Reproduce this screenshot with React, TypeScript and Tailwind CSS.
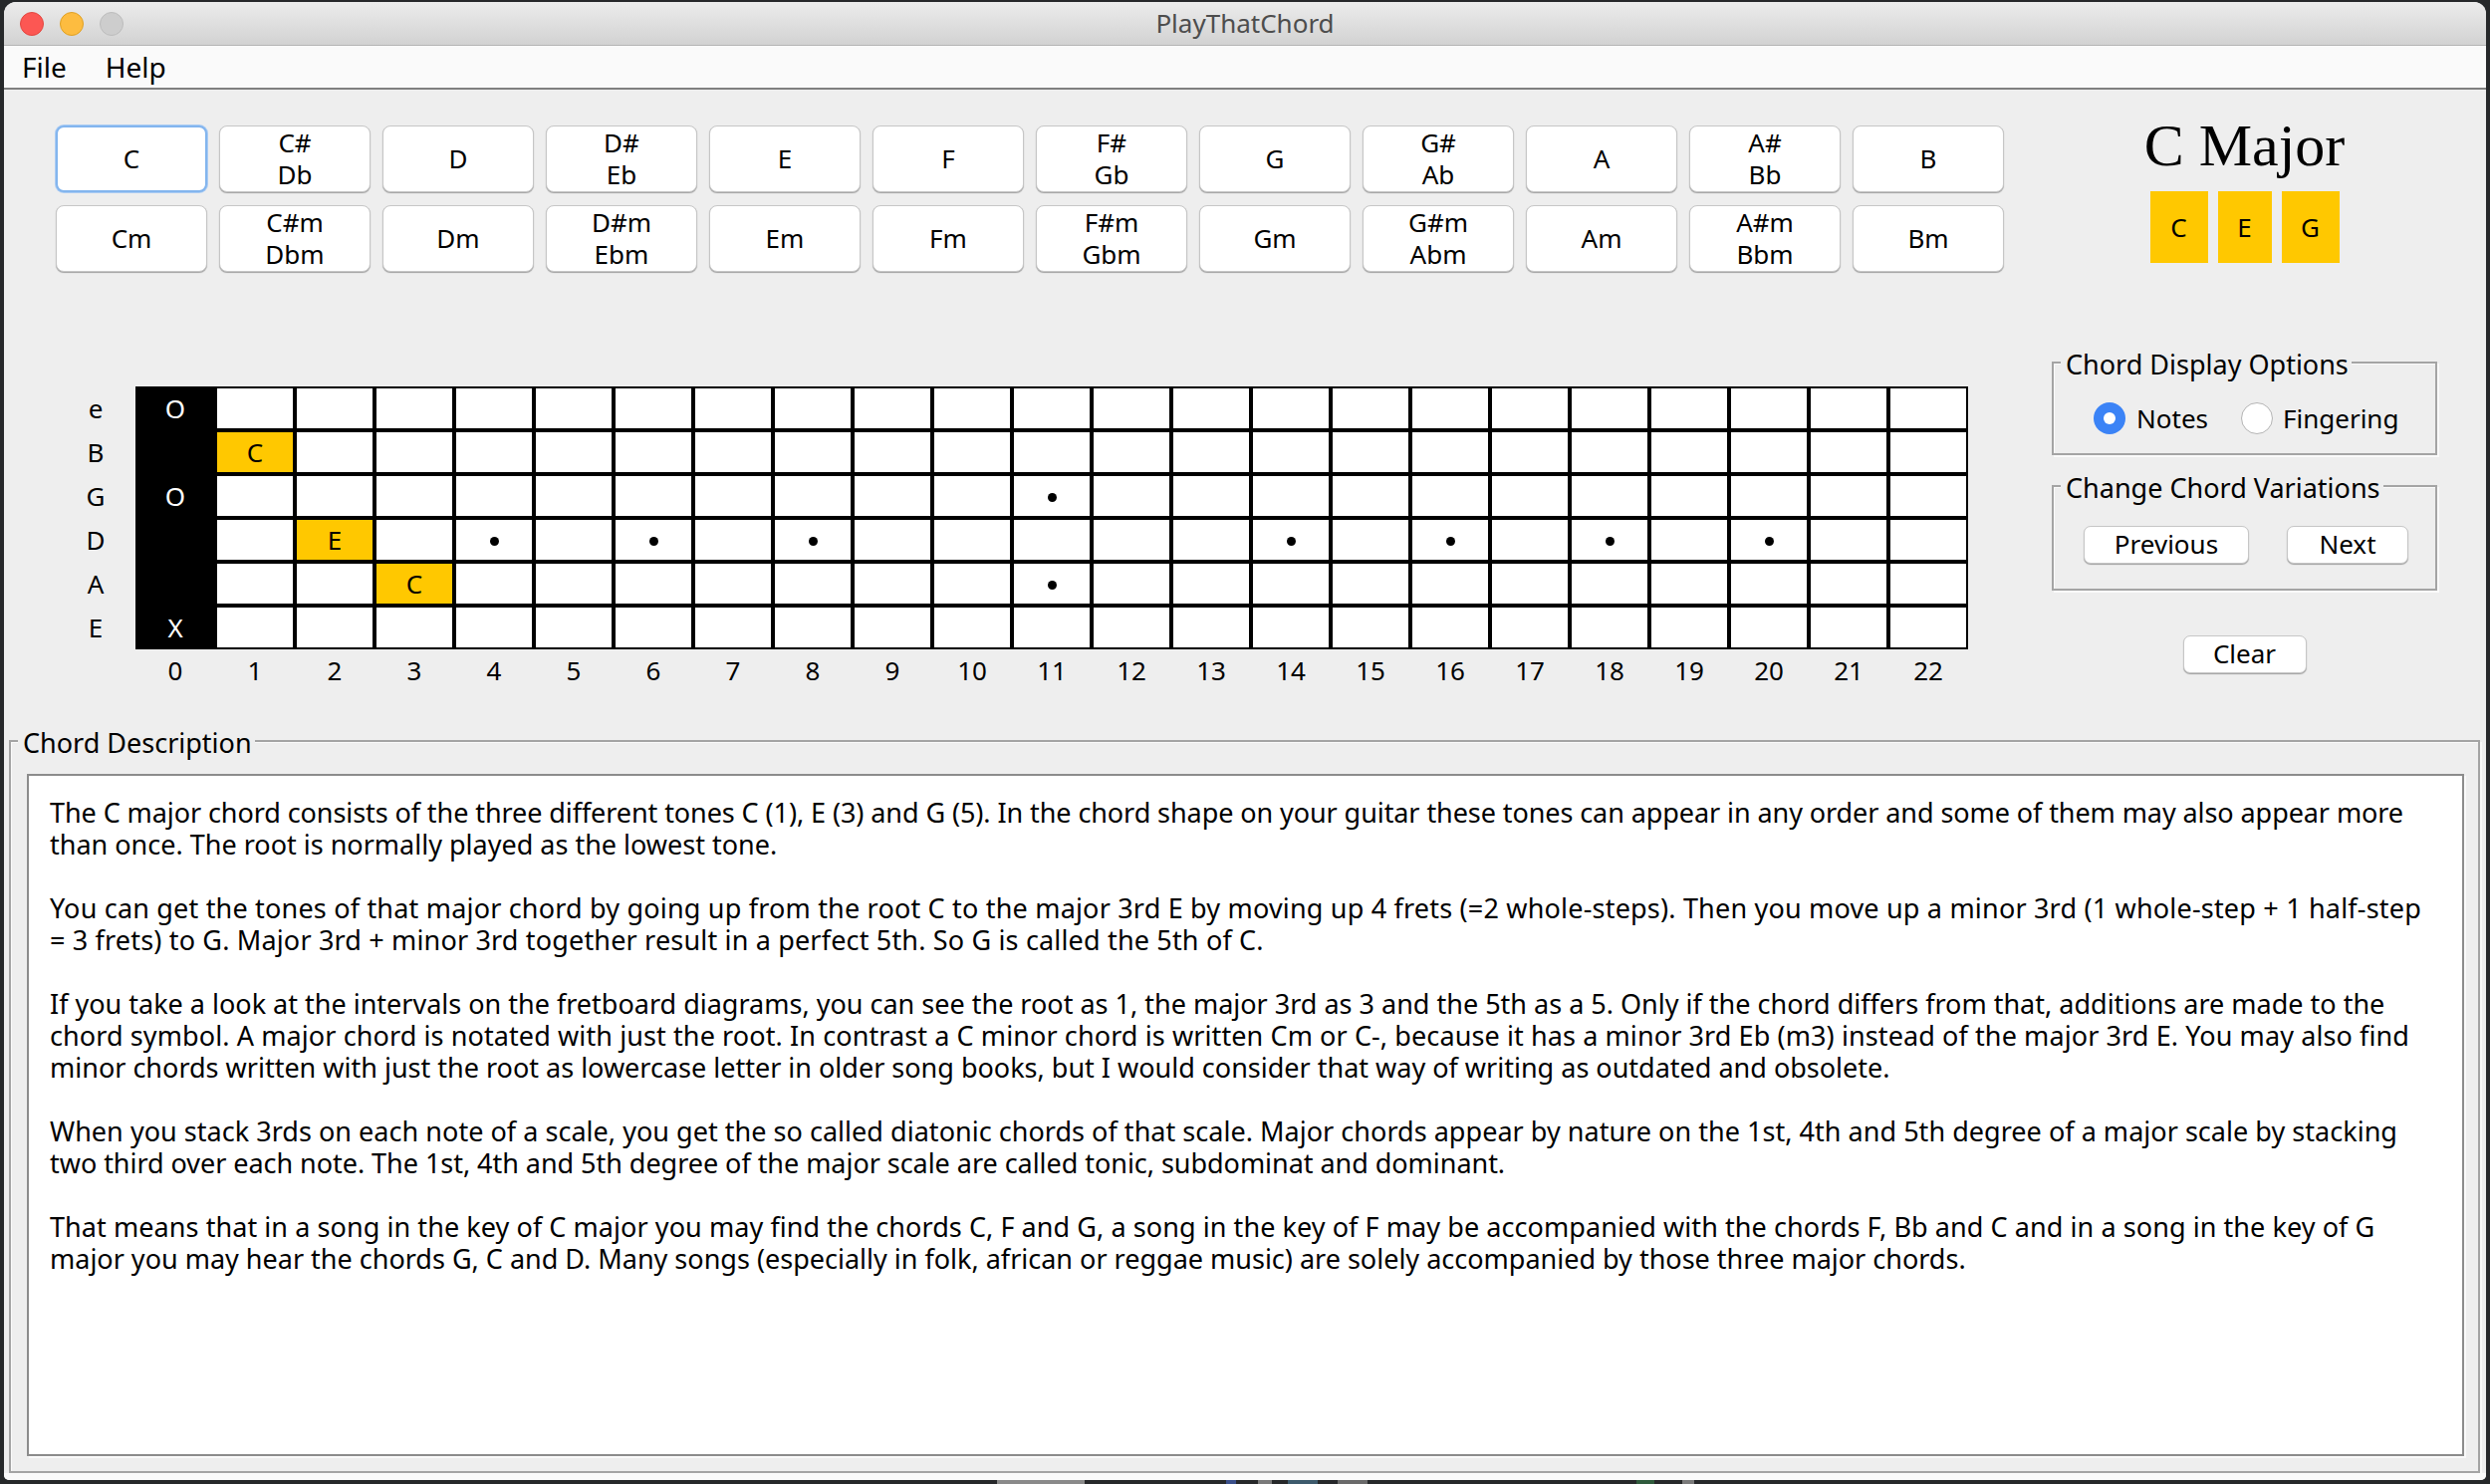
const MAJOR = ["C", "C#|Db", "D", "D#|Eb", "E", "F", "F#|Gb", "G", "G#|Ab", "A", "A#|Bb", "B"];
const MINOR = ["Cm", "C#m|Dbm", "Dm", "D#m|Ebm", "Em", "Fm", "F#m|Gbm", "Gm", "G#m|Abm", "Am", "A#m|Bbm", "Bm"];
const STRINGS = ["e", "B", "G", "D", "A", "E"];
const FRETS = Array.from({ length: 23 }, (_, i) => i);
const OPEN = ["O", "", "O", "", "", "X"];
const NOTES: Record<string, string> = { "1-1": "C", "3-2": "E", "4-3": "C" };
const DOTS = ["2-11", "3-4", "3-6", "3-8", "3-14", "3-16", "3-18", "3-20", "4-11"];

// text plus a small tracking nudge per line
const PARAGRAPHS: [string, string][][] = [
  [
    ["The C major chord consists of the three different tones C (1), E (3) and G (5). In the chord shape on your guitar these tones can appear in any order and some of them may also appear more", "tracking-[-0.08px]"],
    ["than once. The root is normally played as the lowest tone.", ""],
  ],
  [
    ["You can get the tones of that major chord by going up from the root C to the major 3rd E by moving up 4 frets (=2 whole-steps). Then you move up a minor 3rd (1 whole-step + 1 half-step", "tracking-[0.19px]"],
    ["= 3 frets) to G. Major 3rd + minor 3rd together result in a perfect 5th. So G is called the 5th of C.", "tracking-[0.17px]"],
  ],
  [
    ["If you take a look at the intervals on the fretboard diagrams, you can see the root as 1, the major 3rd as 3 and the 5th as a 5. Only if the chord differs from that, additions are made to the", ""],
    ["chord symbol. A major chord is notated with just the root. In contrast a C minor chord is written Cm or C-, because it has a minor 3rd Eb (m3) instead of the major 3rd E. You may also find", "tracking-[0.1px]"],
    ["minor chords written with just the root as lowercase letter in older song books, but I would consider that way of writing as outdated and obsolete.", ""],
  ],
  [
    ["When you stack 3rds on each note of a scale, you get the so called diatonic chords of that scale. Major chords appear by nature on the 1st, 4th and 5th degree of a major scale by stacking", "tracking-[0.03px]"],
    ["two third over each note. The 1st, 4th and 5th degree of the major scale are called tonic, subdominat and dominant.", "tracking-[-0.04px]"],
  ],
  [
    ["That means that in a song in the key of C major you may find the chords C, F and G, a song in the key of F may be accompanied with the chords F, Bb and C and in a song in the key of G", "tracking-[0.07px]"],
    ["major you may hear the chords G, C and D. Many songs (especially in folk, african or reggae music) are solely accompanied by those three major chords.", ""],
  ],
];

function ChordButton({ label, active }: { label: string; active?: boolean }) {
  const lines = label.split("|");
  return (
    <button
      className={`h-[67px] w-[152px] rounded-[8px] bg-white pb-[2px] text-center leading-[32px] ${
        active ? "border-2 border-[#83b5ee] shadow-[0_0_0_1px_#a9cbf3]" : "border border-[#c6c6c6] shadow-[0_1px_1px_#a0a0a0]"
      }`}
    >
      {lines.map((l) => (
        <div key={l}>{l}</div>
      ))}
    </button>
  );
}

function PlainButton({ label, width }: { label: string; width: string }) {
  return (
    <button className={`h-[38px] ${width} rounded-[7px] border border-[#c6c6c6] bg-white pb-[2px] leading-none shadow-[0_1px_1px_#a0a0a0]`}>
      {label}
    </button>
  );
}

function GroupBox({ title, className, children }: { title: string; className: string; children: React.ReactNode }) {
  return (
    <div className={`relative border-2 border-[#a4a4a4] shadow-[2px_2px_0_#fafafa,inset_1px_1px_0_#fafafa] ${className}`}>
      <span className="absolute top-[-16px] left-[7px] bg-[#eeeeee] pr-[3px] pl-[5px] text-[27px] leading-[34px]">{title}</span>
      {children}
    </div>
  );
}

function Fretboard() {
  return (
    <div className="ml-[56px] flex">
      <div className="mt-[2px] flex w-[76px] flex-col gap-[4px] pr-[4px]">
        {STRINGS.map((s) => (
          <div key={s} className="flex h-[40px] items-center justify-center pb-[1px] leading-none">
            {s}
          </div>
        ))}
      </div>
      <div>
        <div className="grid grid-cols-[repeat(23,76px)] grid-rows-[repeat(6,40px)] gap-[4px] bg-black p-[2px]">
          {STRINGS.map((s, row) =>
            FRETS.map((f) => {
              if (f === 0) {
                return (
                  <div key={f} className="flex items-center justify-center bg-black leading-none text-white">
                    {OPEN[row]}
                  </div>
                );
              }
              const note = NOTES[`${row}-${f}`];
              return (
                <div
                  key={`${s}-${f}`}
                  className={`flex items-center justify-center pb-[1px] leading-none ${note ? "bg-[#ffc800]" : "bg-white"}`}
                >
                  {note}
                  {DOTS.includes(`${row}-${f}`) && <div className="mt-[4px] ml-[1px] h-[9px] w-[9px] rounded-full bg-black" />}
                </div>
              );
            })
          )}
        </div>
        <div className="grid h-[42px] grid-cols-[repeat(23,76px)] gap-[4px] px-[2px]">
          {FRETS.map((f) => (
            <div key={f} className="flex items-center justify-center leading-none">
              {f}
            </div>
          ))}
        </div>
      </div>
    </div>
  );
}

export default function App() {
  return (
    <div className="h-[1490px] w-[2500px] overflow-hidden bg-[#26282a] pt-[2px] pr-[4px] pl-[4px] font-['Noto_Sans',sans-serif] text-[26px] text-black">
      <div className="flex h-[1484px] flex-col overflow-hidden rounded-t-[12px] rounded-b-[5px] bg-[#eeeeee]">
        {/* title bar */}
        <div className="relative flex h-[44px] shrink-0 items-center justify-center border-b border-[#b4b4b4] bg-gradient-to-b from-[#ececec] to-[#d2d2d2] text-[#4d4d4d]">
          <div className="absolute top-[10px] left-[16px] flex gap-[16px]">
            <div className="h-[24px] w-[24px] rounded-full border border-[#e2463f] bg-[#fc5753]" />
            <div className="h-[24px] w-[24px] rounded-full border border-[#dfa023] bg-[#fdbc40]" />
            <div className="h-[24px] w-[24px] rounded-full border border-[#bcbcbc] bg-[#cdcdcd]" />
          </div>
          PlayThatChord
        </div>
        {/* menu */}
        <div className="flex h-[44px] shrink-0 items-center gap-[39px] border-b-2 border-[#808080] bg-[#fafafa] pl-[18px] text-[28px]">
          <span>File</span>
          <span>Help</span>
        </div>

        <div className="flex h-[653px] shrink-0">
          <div className="w-[2056px] pt-[36px]">
            <div className="ml-[52px] flex flex-col gap-[13px]">
              <div className="flex gap-[12px]">
                {MAJOR.map((m, i) => (
                  <ChordButton key={m} label={m} active={i === 0} />
                ))}
              </div>
              <div className="flex gap-[12px]">
                {MINOR.map((m) => (
                  <ChordButton key={m} label={m} />
                ))}
              </div>
            </div>
            <div className="mt-[115px]">
              <Fretboard />
            </div>
          </div>

          <div className="flex w-[387px] flex-col items-stretch pt-[26px]">
            <div className="text-center font-['Liberation_Serif',serif] text-[60px] leading-[60px]">C Major</div>
            <div className="mt-[16px] flex justify-center gap-[10px]">
              <div className="flex h-[72px] w-[58px] items-center justify-center bg-[#ffc800]">C</div>
              <div className="flex h-[72px] w-[54px] items-center justify-center bg-[#ffc800]">E</div>
              <div className="flex h-[72px] w-[58px] items-center justify-center bg-[#ffc800]">G</div>
            </div>
            <GroupBox title="Chord Display Options" className="mt-[99px] h-[94px]">
              <div className="flex h-full items-center pt-[20px] pl-[40px]">
                <div className="flex h-[32px] w-[32px] items-center justify-center rounded-full bg-[#3b83f6]">
                  <div className="h-[12px] w-[12px] rounded-full bg-white" />
                </div>
                <span className="ml-[11px] leading-none">Notes</span>
                <div className="ml-[33px] h-[32px] w-[32px] rounded-full border border-[#b4b4b4] bg-white" />
                <span className="ml-[10px] leading-none">Fingering</span>
              </div>
            </GroupBox>
            <GroupBox title="Change Chord Variations" className="mt-[30px] h-[106px]">
              <div className="flex gap-[38px] pt-[39px] pl-[30px]">
                <PlainButton label="Previous" width="w-[166px]" />
                <PlainButton label="Next" width="w-[122px]" />
              </div>
            </GroupBox>
            <div className="mt-[45px] flex justify-center">
              <PlainButton label="Clear" width="w-[124px]" />
            </div>
          </div>
        </div>

        {/* description */}
        <GroupBox title="Chord Description" className="mr-[6px] ml-[5px] h-[736px] shrink-0">
          <div className="h-full pt-[32px] pr-[14px] pb-[15px] pl-[16px]">
            <div className="flex h-full flex-col gap-[32px] border-2 border-[#8c8c8c] bg-white pt-[21px] pl-[21px] text-[27px] leading-[32px] whitespace-nowrap shadow-[2px_2px_0_#fafafa]">
              {PARAGRAPHS.map((p) => (
                <div key={p[0][0]}>
                  {p.map(([line, tracking]) => (
                    <div key={line} className={tracking}>
                      {line}
                    </div>
                  ))}
                </div>
              ))}
            </div>
          </div>
        </GroupBox>
        <div className="min-h-0 flex-1 bg-[#fafafa]" />
      </div>
      {/* bit of desktop showing under the window */}
      <div className="flex h-[4px]">
        <div className="ml-[997px] h-full w-[88px] bg-[#8a8a8a]" />
        <div className="ml-[142px] h-full w-[10px] bg-[#3a4f8a]" />
        <div className="ml-[22px] h-full w-[14px] bg-[#7a7a7a]" />
        <div className="ml-[16px] h-full w-[30px] bg-[#3d5a6c]" />
        <div className="ml-[20px] h-full w-[30px] bg-[#6a6a6a]" />
        <div className="ml-[270px] h-full w-[18px] bg-[#2f5a3c]" />
        <div className="ml-[28px] h-full w-[12px] bg-[#7a7a7a]" />
      </div>
    </div>
  );
}
